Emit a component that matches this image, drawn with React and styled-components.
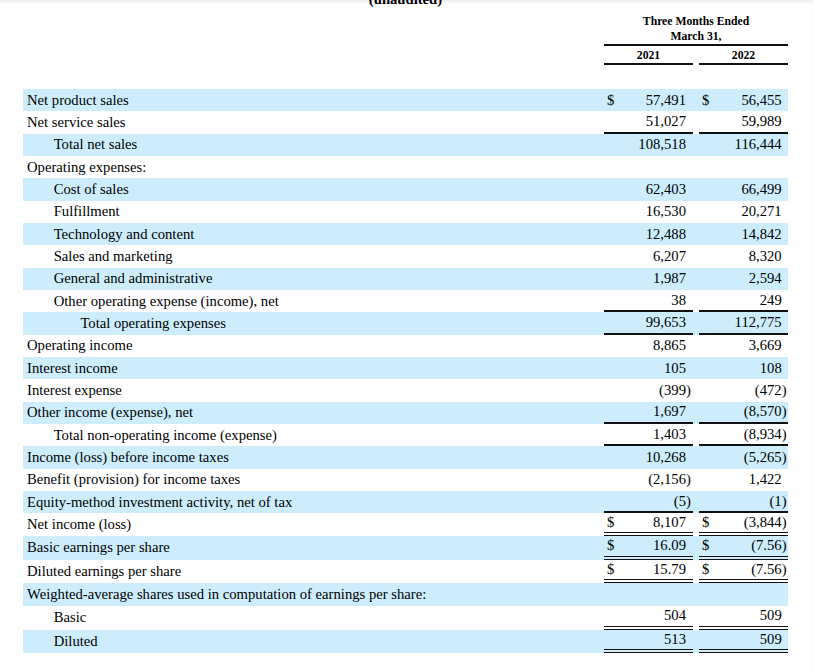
import React from 'react';
import styled, { createGlobalStyle } from 'styled-components';

const rows = [
  { label: 'Net product sales', a: '57,491', b: '56,455', dollar: true },
  { label: 'Net service sales', a: '51,027', b: '59,989', line: 'single' },
  { label: 'Total net sales', level: 1, a: '108,518', b: '116,444' },
  { label: 'Operating expenses:' },
  { label: 'Cost of sales', level: 1, a: '62,403', b: '66,499' },
  { label: 'Fulfillment', level: 1, a: '16,530', b: '20,271' },
  { label: 'Technology and content', level: 1, a: '12,488', b: '14,842' },
  { label: 'Sales and marketing', level: 1, a: '6,207', b: '8,320' },
  { label: 'General and administrative', level: 1, a: '1,987', b: '2,594' },
  { label: 'Other operating expense (income), net', level: 1, a: '38', b: '249', line: 'single' },
  { label: 'Total operating expenses', level: 2, a: '99,653', b: '112,775', line: 'single' },
  { label: 'Operating income', a: '8,865', b: '3,669' },
  { label: 'Interest income', a: '105', b: '108' },
  { label: 'Interest expense', a: '(399)', b: '(472)' },
  { label: 'Other income (expense), net', a: '1,697', b: '(8,570)', line: 'single' },
  { label: 'Total non-operating income (expense)', level: 1, a: '1,403', b: '(8,934)', line: 'single' },
  { label: 'Income (loss) before income taxes', a: '10,268', b: '(5,265)' },
  { label: 'Benefit (provision) for income taxes', a: '(2,156)', b: '1,422' },
  { label: 'Equity-method investment activity, net of tax', a: '(5)', b: '(1)', line: 'single' },
  { label: 'Net income (loss)', a: '8,107', b: '(3,844)', dollar: true, line: 'double', h: 23 },
  { label: 'Basic earnings per share', a: '16.09', b: '(7.56)', dollar: true, line: 'double', h: 23.4 },
  { label: 'Diluted earnings per share', a: '15.79', b: '(7.56)', dollar: true, line: 'double', h: 23.3 },
  { label: 'Weighted-average shares used in computation of earnings per share:', h: 23 },
  { label: 'Basic', level: 1, a: '504', b: '509', line: 'double', h: 24 },
  { label: 'Diluted', level: 1, a: '513', b: '509', line: 'double', h: 23.5 },
];

const GlobalStyle = createGlobalStyle`
  body {
    margin: 0;
    background: #fff;
    color: #000;
    font-family: "Liberation Serif", "Times New Roman", serif;
  }
`;

const Page = styled.div`
  width: 813px;
  height: 671px;
  overflow: hidden;
  box-sizing: border-box;
  padding: 0 25px 0 23px;
  box-shadow: inset 0 3px 3px -1px rgba(0, 0, 0, 0.08);
`;

const Title = styled.div`
  margin-top: -9px;
  text-align: center;
  font-weight: bold;
  font-size: 14.67px;
  line-height: 17px;
`;

const Grid = styled.div`
  display: grid;
  grid-template-columns: 575px 89px 89px;
  column-gap: 6px;
`;

const Head = styled(Grid)`
  margin-top: 7px;
  font-weight: bold;
  font-size: 11.7px;
  text-align: center;
`;

const Period = styled.div`
  grid-column: 2 / 4;
  line-height: 14.5px;
  border-bottom: 2px solid #111;
`;

const Year = styled.div`
  grid-column: ${p => p.$col};
  margin-top: 2px;
  line-height: 15px;
  border-bottom: 2px solid #111;
`;

const Table = styled.div`
  margin-top: 24px;
  font-size: 14.67px;
`;

const Row = styled(Grid)`
  height: ${p => p.$h}px;
  background: ${p => (p.$striped ? '#cdedfd' : 'transparent')};
`;

const Label = styled.div`
  display: flex;
  align-items: center;
  padding-left: ${p => 4 + p.$level * 26.7}px;
  white-space: nowrap;
`;

const Cell = styled.div`
  display: flex;
  align-items: center;
  justify-content: space-between;
  box-sizing: border-box;
  padding: 0 ${p => p.$pr}px 0 3px;
  border-bottom: ${p =>
    p.$line === 'double' ? '4px double #111' : p.$line === 'single' ? '2px solid #111' : '0'};
`;

const Amount = styled.span`
  margin-left: auto;
`;

const Paren = styled.span`
  margin-right: -0.333em;
`;

function Value({ text }) {
  if (text.startsWith('(')) {
    return (
      <Amount>
        {text.slice(0, -1)}
        <Paren>)</Paren>
      </Amount>
    );
  }
  return <Amount>{text}</Amount>;
}

export default function App() {
  return (
    <>
      <GlobalStyle />
      <Page>
        <Title>(unaudited)</Title>
        <Head>
          <Period>
            Three Months Ended
            <br />
            March 31,
          </Period>
          <Year $col={2}>2021</Year>
          <Year $col={3}>2022</Year>
        </Head>
        <Table>
          {rows.map((r, i) => (
            <Row key={r.label} $striped={i % 2 === 0} $h={r.h || 22.33}>
              <Label $level={r.level || 0}>{r.label}</Label>
              {r.a !== undefined && (
                <>
                  <Cell $pr={7} $line={r.line}>
                    {r.dollar && <span>$</span>}
                    <Value text={r.a} />
                  </Cell>
                  <Cell $pr={6.3} $line={r.line}>
                    {r.dollar && <span>$</span>}
                    <Value text={r.b} />
                  </Cell>
                </>
              )}
            </Row>
          ))}
        </Table>
      </Page>
    </>
  );
}
